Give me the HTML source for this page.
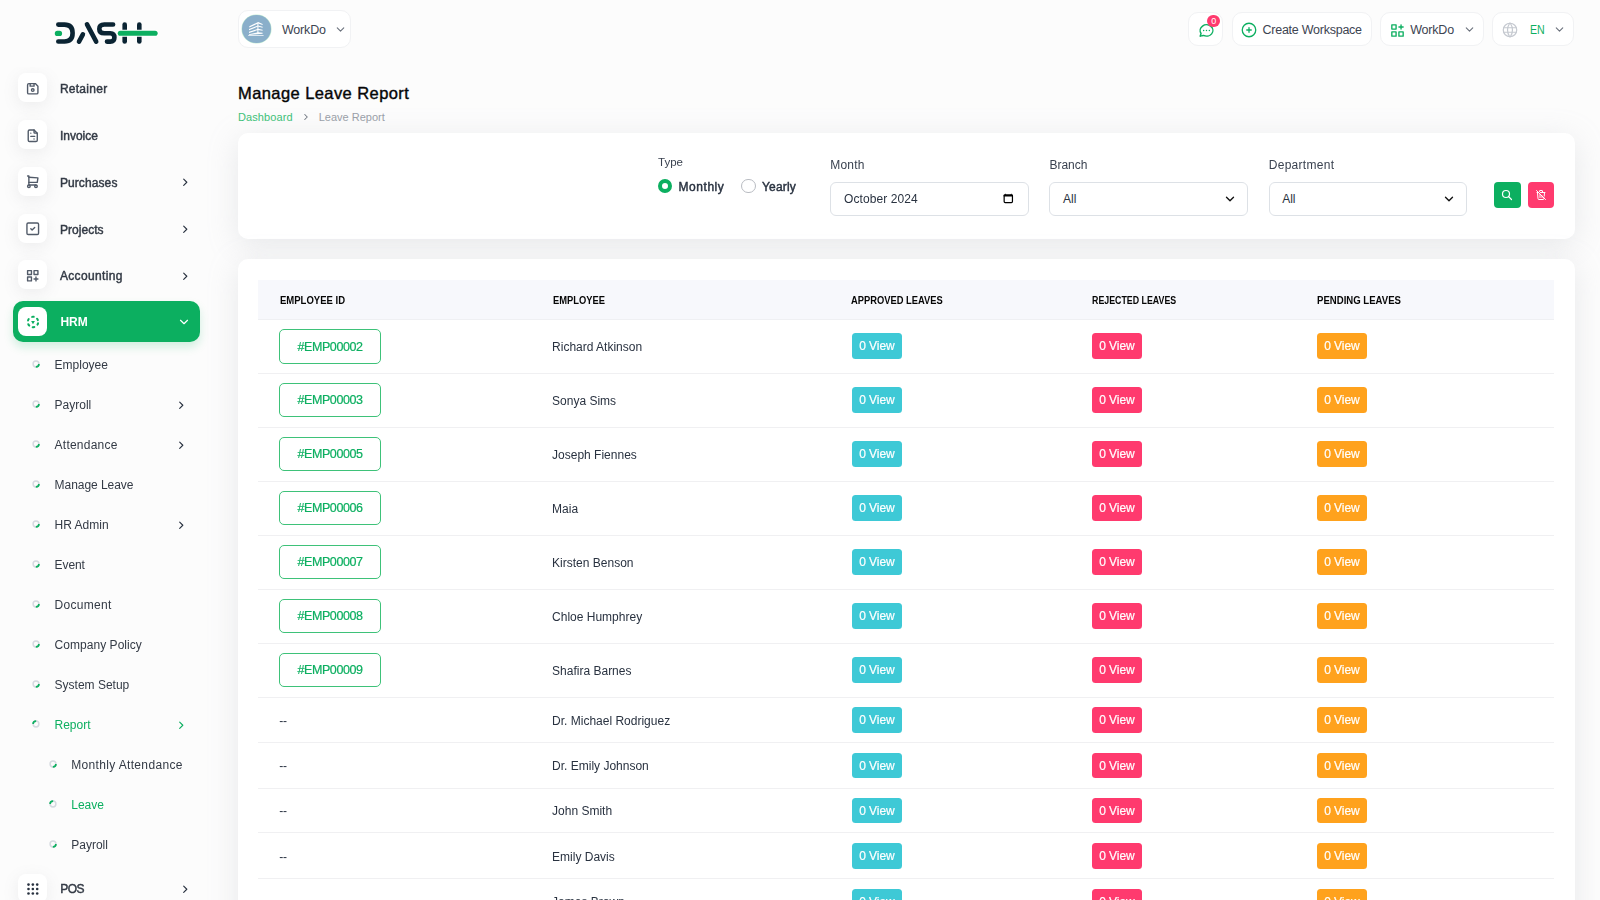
<!DOCTYPE html>
<html>
<head>
<meta charset="utf-8">
<style>
*{box-sizing:border-box;margin:0;padding:0}
html,body{width:1600px;height:900px;overflow:hidden}
body{position:relative;background:#fcfcfc;font-family:"Liberation Sans",sans-serif;color:#293240}
.abs{position:absolute;overflow:visible}
.t{position:absolute;white-space:nowrap;line-height:1}
.sbw{position:absolute;left:0;top:0;width:237px;height:900px;will-change:transform}
.ibox{position:absolute;left:18.2px;width:29.3px;height:29px;border-radius:8px;background:#fff;box-shadow:0 4px 16px rgba(120,125,135,0.12)}
.clip{position:absolute;left:0;top:67px;width:237px;height:833px;overflow:hidden}
.hbox{position:absolute;background:#fff;border:1px solid #f1f2f4;border-radius:10px}
.card{position:absolute;left:237.5px;width:1337px;background:#fff;border-radius:10px;box-shadow:0 6px 30px rgba(178,184,192,0.28)}
.inp{position:absolute;top:182px;height:33.5px;width:199px;border:1px solid #dde1e6;border-radius:6px;background:#fff}
.line{position:absolute;left:258px;width:1296px;height:1px;background:#f0f0f2}
.eid{position:absolute;left:279.25px;width:101.5px;height:34.5px;border:1px solid #3ec279;border-radius:5px}
.bdg{position:absolute;width:50.75px;height:25.5px;border-radius:3.5px}
.gr{background:#0caf60}
</style>
</head>
<body>
<svg class="abs" style="left:50px;top:18px" width="112" height="32" viewBox="50 18 112 32">
  <g stroke="#0b2433" stroke-width="4.6" stroke-linecap="round" fill="none">
    <path d="M58.3 24.6 H64.5 Q72.6 24.6 72.6 33.05 Q72.6 41.5 64.5 41.5 H58.3"/>
    <path d="M79 41.6 L82.9 34.3"/>
    <path d="M87 24.3 L96.2 41.7"/>
    <path d="M113.1 24.5 H104.3 Q99.3 24.5 99.3 28.9 Q99.3 33.2 104.3 33.2 H110.3 Q114.4 33.2 114.4 37.4 Q114.4 41.6 110.3 41.6 H107"/>
    <path d="M124.7 24.6 V41.5"/>
    <path d="M139.3 24.6 V41.5"/>
  </g>
  <g stroke-linecap="round" fill="none">
    <path d="M57.4 33.4 H59.5" stroke="#0caf60" stroke-width="5.2"/>
    <path d="M120.3 33.25 H155.1" stroke="#fff" stroke-width="7.2"/>
    <path d="M120.3 33.25 H155.1" stroke="#0caf60" stroke-width="5.1"/>
  </g>
</svg>
<div class="sbw">
<div class="clip"><div class="ibox" style="top:6.00px"></div>
<div class="ibox" style="top:52.80px"></div>
<div class="ibox" style="top:99.60px"></div>
<div class="ibox" style="top:146.50px"></div>
<div class="ibox" style="top:193.30px"></div>
<div class="ibox" style="top:806.80px"></div>
</div>
<svg class="abs" style="left:25.35px;top:80.75px" width="15.5" height="15.5" viewBox="0 0 24 24" fill="none" stroke="#525b69" stroke-width="2.15" stroke-linecap="round" stroke-linejoin="round"><path d="M6 4h10l4 4v10a2 2 0 0 1 -2 2h-12a2 2 0 0 1 -2 -2v-12a2 2 0 0 1 2 -2"/><circle cx="12" cy="14" r="2"/><path d="M14 4l0 4l-6 0l0 -4"/></svg>
<div class="t" style="left:59.9px;top:83.04px;font-size:12px;color:#333a45;-webkit-text-stroke:0.45px #333a45;letter-spacing:0.27px;">Retainer</div>
<svg class="abs" style="left:25.35px;top:127.55px" width="15.5" height="15.5" viewBox="0 0 24 24" fill="none" stroke="#525b69" stroke-width="2.15" stroke-linecap="round" stroke-linejoin="round"><path d="M14 3v4a1 1 0 0 0 1 1h4"/><path d="M17 21h-10a2 2 0 0 1 -2 -2v-14a2 2 0 0 1 2 -2h7l5 5v11a2 2 0 0 1 -2 2z"/><path d="M9 8h.01"/><path d="M9 13h6"/><path d="M14 17h.01"/></svg>
<div class="t" style="left:59.9px;top:129.84px;font-size:12px;color:#333a45;-webkit-text-stroke:0.45px #333a45;">Invoice</div>
<svg class="abs" style="left:25.35px;top:174.35px" width="15.5" height="15.5" viewBox="0 0 24 24" fill="none" stroke="#525b69" stroke-width="2.15" stroke-linecap="round" stroke-linejoin="round"><path d="M6 19m-2 0a2 2 0 1 0 4 0a2 2 0 1 0 -4 0"/><path d="M17 19m-2 0a2 2 0 1 0 4 0a2 2 0 1 0 -4 0"/><path d="M17 17h-11v-14h-2"/><path d="M6 5l14 1l-1 7h-13"/></svg>
<div class="t" style="left:59.9px;top:176.64px;font-size:12px;color:#333a45;-webkit-text-stroke:0.45px #333a45;letter-spacing:0.1px;">Purchases</div>
<svg class="abs" style="left:178.75px;top:175.85px" width="12.5" height="12.5" viewBox="0 0 24 24" fill="none" stroke="#293240" stroke-width="2.2" stroke-linecap="round" stroke-linejoin="round"><path d="M9 6l6 6l-6 6"/></svg>
<svg class="abs" style="left:25.35px;top:221.25px" width="15.5" height="15.5" viewBox="0 0 24 24" fill="none" stroke="#525b69" stroke-width="2.15" stroke-linecap="round" stroke-linejoin="round"><path d="M3 5a2 2 0 0 1 2 -2h14a2 2 0 0 1 2 2v14a2 2 0 0 1 -2 2h-14a2 2 0 0 1 -2 -2v-14z"/><path d="M9 12l2 2l4 -4"/></svg>
<div class="t" style="left:59.9px;top:223.54px;font-size:12px;color:#333a45;-webkit-text-stroke:0.45px #333a45;letter-spacing:0.05px;">Projects</div>
<svg class="abs" style="left:178.75px;top:222.75px" width="12.5" height="12.5" viewBox="0 0 24 24" fill="none" stroke="#293240" stroke-width="2.2" stroke-linecap="round" stroke-linejoin="round"><path d="M9 6l6 6l-6 6"/></svg>
<svg class="abs" style="left:25.35px;top:268.05px" width="15.5" height="15.5" viewBox="0 0 24 24" fill="none" stroke="#525b69" stroke-width="2.15" stroke-linecap="round" stroke-linejoin="round"><path d="M4 4h6v6h-6z"/><path d="M14 4h6v6h-6z"/><path d="M4 14h6v6h-6z"/><path d="M14 17h6m-3 -3v6"/></svg>
<div class="t" style="left:59.9px;top:270.34px;font-size:12px;color:#333a45;-webkit-text-stroke:0.45px #333a45;letter-spacing:0.36px;">Accounting</div>
<svg class="abs" style="left:178.75px;top:269.55px" width="12.5" height="12.5" viewBox="0 0 24 24" fill="none" stroke="#293240" stroke-width="2.2" stroke-linecap="round" stroke-linejoin="round"><path d="M9 6l6 6l-6 6"/></svg>
<div class="abs gr" style="left:12.7px;top:300.8px;width:187.3px;height:40.8px;border-radius:10px;box-shadow:0 5px 10px rgba(12,175,96,0.18)"></div>
<div class="abs" style="left:18px;top:306.6px;width:29.4px;height:29.4px;border-radius:8px;background:#fff"></div>
<svg class="abs" style="left:25px;top:313px" width="16" height="16" viewBox="0 0 16 16"><circle cx="8" cy="9" r="5.2" fill="none" stroke="#0caf60" stroke-width="2" stroke-linecap="round" stroke-dasharray="1.6 3.845" transform="rotate(13 8 9)"/><path d="M6.1 8.0 L9.9 8.0 L8 11.2 Z" fill="#0caf60"/></svg>
<div class="t" style="left:60.4px;top:315.64px;font-size:12px;color:#ffffff;font-weight:700;">HRM</div>
<svg class="abs" style="left:176.6px;top:314.5px" width="14" height="14" viewBox="0 0 24 24" fill="none" stroke="#ffffff" stroke-width="2" stroke-linecap="round" stroke-linejoin="round"><path d="M6 9l6 6l6 -6"/></svg>
<svg class="abs" style="left:31.299999999999997px;top:358.9px" width="10" height="10" viewBox="0 0 10 10"><circle cx="5" cy="5" r="2.9" fill="none" stroke="#d5d9e0" stroke-width="1.5"/><circle cx="5" cy="5" r="2.9" fill="none" stroke="#0caf60" stroke-width="1.7" stroke-dasharray="4.6 20" transform="rotate(0 5 5)"/></svg>
<div class="t" style="left:54.6px;top:358.54px;font-size:12px;color:#333a45;">Employee</div>
<svg class="abs" style="left:31.299999999999997px;top:398.9px" width="10" height="10" viewBox="0 0 10 10"><circle cx="5" cy="5" r="2.9" fill="none" stroke="#d5d9e0" stroke-width="1.5"/><circle cx="5" cy="5" r="2.9" fill="none" stroke="#0caf60" stroke-width="1.7" stroke-dasharray="4.6 20" transform="rotate(0 5 5)"/></svg>
<div class="t" style="left:54.6px;top:398.54px;font-size:12px;color:#333a45;">Payroll</div>
<svg class="abs" style="left:174.75px;top:399.25px" width="12.5" height="12.5" viewBox="0 0 24 24" fill="none" stroke="#293240" stroke-width="2.2" stroke-linecap="round" stroke-linejoin="round"><path d="M9 6l6 6l-6 6"/></svg>
<svg class="abs" style="left:31.299999999999997px;top:438.9px" width="10" height="10" viewBox="0 0 10 10"><circle cx="5" cy="5" r="2.9" fill="none" stroke="#d5d9e0" stroke-width="1.5"/><circle cx="5" cy="5" r="2.9" fill="none" stroke="#0caf60" stroke-width="1.7" stroke-dasharray="4.6 20" transform="rotate(0 5 5)"/></svg>
<div class="t" style="left:54.6px;top:438.54px;font-size:12px;color:#333a45;letter-spacing:0.23px;">Attendance</div>
<svg class="abs" style="left:174.75px;top:439.25px" width="12.5" height="12.5" viewBox="0 0 24 24" fill="none" stroke="#293240" stroke-width="2.2" stroke-linecap="round" stroke-linejoin="round"><path d="M9 6l6 6l-6 6"/></svg>
<svg class="abs" style="left:31.299999999999997px;top:478.9px" width="10" height="10" viewBox="0 0 10 10"><circle cx="5" cy="5" r="2.9" fill="none" stroke="#d5d9e0" stroke-width="1.5"/><circle cx="5" cy="5" r="2.9" fill="none" stroke="#0caf60" stroke-width="1.7" stroke-dasharray="4.6 20" transform="rotate(0 5 5)"/></svg>
<div class="t" style="left:54.6px;top:478.54px;font-size:12px;color:#333a45;letter-spacing:-0.05px;">Manage Leave</div>
<svg class="abs" style="left:31.299999999999997px;top:518.9px" width="10" height="10" viewBox="0 0 10 10"><circle cx="5" cy="5" r="2.9" fill="none" stroke="#d5d9e0" stroke-width="1.5"/><circle cx="5" cy="5" r="2.9" fill="none" stroke="#0caf60" stroke-width="1.7" stroke-dasharray="4.6 20" transform="rotate(0 5 5)"/></svg>
<div class="t" style="left:54.6px;top:518.54px;font-size:12px;color:#333a45;">HR Admin</div>
<svg class="abs" style="left:174.75px;top:519.25px" width="12.5" height="12.5" viewBox="0 0 24 24" fill="none" stroke="#293240" stroke-width="2.2" stroke-linecap="round" stroke-linejoin="round"><path d="M9 6l6 6l-6 6"/></svg>
<svg class="abs" style="left:31.299999999999997px;top:558.9px" width="10" height="10" viewBox="0 0 10 10"><circle cx="5" cy="5" r="2.9" fill="none" stroke="#d5d9e0" stroke-width="1.5"/><circle cx="5" cy="5" r="2.9" fill="none" stroke="#0caf60" stroke-width="1.7" stroke-dasharray="4.6 20" transform="rotate(0 5 5)"/></svg>
<div class="t" style="left:54.6px;top:558.54px;font-size:12px;color:#333a45;letter-spacing:-0.1px;">Event</div>
<svg class="abs" style="left:31.299999999999997px;top:598.9px" width="10" height="10" viewBox="0 0 10 10"><circle cx="5" cy="5" r="2.9" fill="none" stroke="#d5d9e0" stroke-width="1.5"/><circle cx="5" cy="5" r="2.9" fill="none" stroke="#0caf60" stroke-width="1.7" stroke-dasharray="4.6 20" transform="rotate(0 5 5)"/></svg>
<div class="t" style="left:54.6px;top:598.54px;font-size:12px;color:#333a45;letter-spacing:0.3px;">Document</div>
<svg class="abs" style="left:31.299999999999997px;top:638.9px" width="10" height="10" viewBox="0 0 10 10"><circle cx="5" cy="5" r="2.9" fill="none" stroke="#d5d9e0" stroke-width="1.5"/><circle cx="5" cy="5" r="2.9" fill="none" stroke="#0caf60" stroke-width="1.7" stroke-dasharray="4.6 20" transform="rotate(0 5 5)"/></svg>
<div class="t" style="left:54.6px;top:638.54px;font-size:12px;color:#333a45;letter-spacing:0.04px;">Company Policy</div>
<svg class="abs" style="left:31.299999999999997px;top:678.9px" width="10" height="10" viewBox="0 0 10 10"><circle cx="5" cy="5" r="2.9" fill="none" stroke="#d5d9e0" stroke-width="1.5"/><circle cx="5" cy="5" r="2.9" fill="none" stroke="#0caf60" stroke-width="1.7" stroke-dasharray="4.6 20" transform="rotate(0 5 5)"/></svg>
<div class="t" style="left:54.6px;top:678.54px;font-size:12px;color:#333a45;">System Setup</div>
<svg class="abs" style="left:31.200000000000003px;top:718.5px" width="10" height="10" viewBox="0 0 10 10"><circle cx="5" cy="5" r="2.9" fill="none" stroke="#d5d9e0" stroke-width="1.5"/><circle cx="5" cy="5" r="2.9" fill="none" stroke="#0caf60" stroke-width="1.7" stroke-dasharray="4.6 20" transform="rotate(180 5 5)"/></svg>
<div class="t" style="left:54.5px;top:718.54px;font-size:12px;color:#0caf60;">Report</div>
<svg class="abs" style="left:174.75px;top:719.25px" width="12.5" height="12.5" viewBox="0 0 24 24" fill="none" stroke="#0caf60" stroke-width="2.2" stroke-linecap="round" stroke-linejoin="round"><path d="M9 6l6 6l-6 6"/></svg>
<svg class="abs" style="left:48.1px;top:758.9px" width="10" height="10" viewBox="0 0 10 10"><circle cx="5" cy="5" r="2.9" fill="none" stroke="#d5d9e0" stroke-width="1.5"/><circle cx="5" cy="5" r="2.9" fill="none" stroke="#0caf60" stroke-width="1.7" stroke-dasharray="4.6 20" transform="rotate(0 5 5)"/></svg>
<div class="t" style="left:71.25px;top:758.54px;font-size:12px;color:#333a45;letter-spacing:0.34px;">Monthly Attendance</div>
<svg class="abs" style="left:48.1px;top:798.6px" width="10" height="10" viewBox="0 0 10 10"><circle cx="5" cy="5" r="2.9" fill="none" stroke="#d5d9e0" stroke-width="1.5"/><circle cx="5" cy="5" r="2.9" fill="none" stroke="#0caf60" stroke-width="1.7" stroke-dasharray="4.6 20" transform="rotate(180 5 5)"/></svg>
<div class="t" style="left:71.25px;top:798.54px;font-size:12px;color:#0caf60;">Leave</div>
<svg class="abs" style="left:48.1px;top:838.9px" width="10" height="10" viewBox="0 0 10 10"><circle cx="5" cy="5" r="2.9" fill="none" stroke="#d5d9e0" stroke-width="1.5"/><circle cx="5" cy="5" r="2.9" fill="none" stroke="#0caf60" stroke-width="1.7" stroke-dasharray="4.6 20" transform="rotate(0 5 5)"/></svg>
<div class="t" style="left:71.25px;top:838.54px;font-size:12px;color:#333a45;">Payroll</div>
<svg class="abs" style="left:22px;top:877.9px" width="22" height="22" viewBox="0 0 22 22"><circle cx="6.5" cy="6.6" r="1.3" fill="#293240"/><circle cx="6.5" cy="11.05" r="1.3" fill="#293240"/><circle cx="6.5" cy="15.5" r="1.3" fill="#293240"/><circle cx="10.85" cy="6.6" r="1.3" fill="#293240"/><circle cx="10.85" cy="11.05" r="1.3" fill="#293240"/><circle cx="10.85" cy="15.5" r="1.3" fill="#293240"/><circle cx="15.2" cy="6.6" r="1.3" fill="#293240"/><circle cx="15.2" cy="11.05" r="1.3" fill="#293240"/><circle cx="15.2" cy="15.5" r="1.3" fill="#293240"/></svg>
<div class="t" style="left:60.2px;top:882.64px;font-size:12px;color:#333a45;-webkit-text-stroke:0.45px #333a45;letter-spacing:-0.5px;">POS</div>
<svg class="abs" style="left:178.75px;top:883.05px" width="12.5" height="12.5" viewBox="0 0 24 24" fill="none" stroke="#293240" stroke-width="2.2" stroke-linecap="round" stroke-linejoin="round"><path d="M9 6l6 6l-6 6"/></svg>
</div>
<div class="hbox" style="left:237.7px;top:10px;width:113.7px;height:37.7px"></div>
<div class="abs" style="left:242.3px;top:14.8px;width:28.4px;height:28.4px;border-radius:50%;background:#8aafca;box-shadow:0 0 0 0.6px #c9f0d6"></div>
<svg class="abs" style="left:240px;top:12.5px" width="29" height="29" viewBox="0 0 29 29"><g fill="#ffffff"><path d="M9.3 13.2 L18.2 9.0 L22.6 11.0 L22.6 12.0 L18.2 10.4 L9.3 14.4 Z"/><path d="M9.0 16.0 L18.0 12.4 L22.6 13.8 L22.6 14.8 L18.0 13.6 L9.0 17.2 Z"/><path d="M9.0 18.8 L18.0 15.8 L22.6 16.8 L22.6 17.8 L18.0 17.0 L9.0 20.0 Z"/><path d="M9.0 21.3 L18.0 19.2 L22.6 19.8 L22.6 20.8 L9.0 21.9 Z"/><rect x="17.4" y="10" width="1" height="11"/><path d="M8.2 22.0 H23.6 V23.0 H8.2 Z" opacity="0.7"/></g></svg>
<div class="t" style="left:282px;top:23.82px;font-size:12.5px;color:#3d4451;letter-spacing:-0.2px;">WorkDo</div>
<svg class="abs" style="left:334.0px;top:23.0px" width="13" height="13" viewBox="0 0 24 24" fill="none" stroke="#6a717c" stroke-width="2" stroke-linecap="round" stroke-linejoin="round"><path d="M6 9l6 6l6 -6"/></svg>
<div class="hbox" style="left:1188px;top:12.3px;width:34.7px;height:33.7px"></div>
<svg class="abs" style="left:1197.8px;top:21.7px" width="17" height="17" viewBox="0 0 24 24" fill="none" stroke="#0caf60" stroke-width="2" stroke-linecap="round" stroke-linejoin="round"><path d="M3 20l1.3 -3.9c-2.324 -3.437 -1.426 -7.872 2.1 -10.374c3.526 -2.501 8.59 -2.296 11.845 .48c3.255 2.777 3.695 7.266 1.029 10.501c-2.666 3.235 -7.615 4.215 -11.574 2.293l-4.7 1"/><path d="M12 12l0 .01"/><path d="M8 12l0 .01"/><path d="M16 12l0 .01"/></svg>
<div class="abs" style="left:1207.3px;top:14.6px;width:12.7px;height:12.7px;border-radius:50%;background:#ff3a6e"></div>
<div class="t" style="left:1211.3px;top:16.98px;font-size:9px;color:#ffffff;">0</div>
<div class="hbox" style="left:1232px;top:12.3px;width:140px;height:33.7px"></div>
<svg class="abs" style="left:1240.3px;top:21.0px" width="18" height="18" viewBox="0 0 24 24" fill="none" stroke="#0caf60" stroke-width="1.75" stroke-linecap="round" stroke-linejoin="round"><path d="M3 12a9 9 0 1 0 18 0a9 9 0 0 0 -18 0"/><path d="M9 12h6"/><path d="M12 9v6"/></svg>
<div class="t" style="left:1262.5px;top:23.82px;font-size:12.5px;color:#3d4451;letter-spacing:-0.25px;">Create Workspace</div>
<div class="hbox" style="left:1379.6px;top:12.3px;width:104.4px;height:33.7px"></div>
<svg class="abs" style="left:1389.0px;top:21.8px" width="17" height="17" viewBox="0 0 24 24" fill="none" stroke="#0caf60" stroke-width="1.9" stroke-linecap="round" stroke-linejoin="round"><path d="M4 4h6v6h-6z"/><path d="M4 14h6v6h-6z"/><path d="M14 14h6v6h-6z"/><path d="M14 7h6m-3 -3v6"/></svg>
<div class="t" style="left:1410.2px;top:23.82px;font-size:12.5px;color:#3d4451;letter-spacing:-0.2px;">WorkDo</div>
<svg class="abs" style="left:1463.0px;top:23.0px" width="13" height="13" viewBox="0 0 24 24" fill="none" stroke="#6a717c" stroke-width="2" stroke-linecap="round" stroke-linejoin="round"><path d="M6 9l6 6l6 -6"/></svg>
<div class="hbox" style="left:1492.4px;top:12.3px;width:81.6px;height:33.7px"></div>
<svg class="abs" style="left:1501.1px;top:21.0px" width="18" height="18" viewBox="0 0 24 24" fill="none" stroke="#c5c9d0" stroke-width="1.6" stroke-linecap="round" stroke-linejoin="round"><path d="M3 12a9 9 0 1 0 18 0a9 9 0 0 0 -18 0"/><path d="M3.6 9h16.8"/><path d="M3.6 15h16.8"/><path d="M11.5 3a17 17 0 0 0 0 18"/><path d="M12.5 3a17 17 0 0 1 0 18"/></svg>
<div class="t" style="left:1529.6px;top:23.82px;font-size:12.5px;color:#0caf60;transform:scaleX(0.8500);transform-origin:0 0;">EN</div>
<svg class="abs" style="left:1552.8px;top:23.0px" width="13" height="13" viewBox="0 0 24 24" fill="none" stroke="#6a717c" stroke-width="2" stroke-linecap="round" stroke-linejoin="round"><path d="M6 9l6 6l6 -6"/></svg>
<div class="t" style="left:238px;top:84.78px;font-size:16.5px;color:#060606;letter-spacing:0.42px;-webkit-text-stroke:0.4px #060606;">Manage Leave Report</div>
<div class="t" style="left:238px;top:112.09px;font-size:11px;color:#3ec279;letter-spacing:0.1px;">Dashboard</div>
<svg class="abs" style="left:300.8px;top:111.8px" width="10" height="10" viewBox="0 0 24 24" fill="none" stroke="#6f7680" stroke-width="2.5" stroke-linecap="round" stroke-linejoin="round"><path d="M9 6l6 6l-6 6"/></svg>
<div class="t" style="left:318.75px;top:112.09px;font-size:11px;color:#9aa0a8;">Leave Report</div>
<div class="card" style="top:132.5px;height:106.5px"></div>
<div class="t" style="left:658px;top:156.77px;font-size:11.5px;color:#3a4250;">Type</div>
<div class="abs" style="left:657.5px;top:178.8px;width:14px;height:14px;border-radius:50%;border:4px solid #0caf60;background:#fff"></div>
<div class="t" style="left:678.5px;top:180.84px;font-size:12px;color:#293240;-webkit-text-stroke:0.45px #293240;letter-spacing:0.55px;">Monthly</div>
<div class="abs" style="left:741px;top:178.5px;width:14.5px;height:14.5px;border-radius:50%;border:1px solid #b9bcc2;background:#fff"></div>
<div class="t" style="left:762px;top:180.84px;font-size:12px;color:#293240;-webkit-text-stroke:0.45px #293240;letter-spacing:0.18px;">Yearly</div>
<div class="t" style="left:830.3px;top:159.14px;font-size:12px;color:#3a4250;letter-spacing:0.2px;">Month</div>
<div class="inp" style="left:830.3px;width:198.5px"></div>
<div class="t" style="left:844px;top:192.84px;font-size:12px;color:#293240;letter-spacing:0.09px;">October 2024</div>
<svg class="abs" style="left:1002.5px;top:192.5px" width="11" height="11" viewBox="0 0 11 11"><rect x="1.15" y="2.0" width="8.3" height="7.6" rx="1" fill="none" stroke="#000" stroke-width="1.2"/><rect x="0.6" y="1.6" width="9.4" height="2.0" rx="0.6" fill="#000"/><path d="M2.3 0.6 L3.3 1.8 H1.6 Z M8.3 0.6 L9.0 1.8 H7.3 Z" fill="#000"/></svg>
<div class="t" style="left:1049.4px;top:159.14px;font-size:12px;color:#3a4250;">Branch</div>
<div class="inp" style="left:1049.4px;width:198.3px"></div>
<div class="t" style="left:1063.1px;top:192.84px;font-size:12px;color:#293240;">All</div>
<svg class="abs" style="left:1223.1px;top:191.6px" width="14" height="14" viewBox="0 0 24 24" fill="none" stroke="#111111" stroke-width="2.3" stroke-linecap="round" stroke-linejoin="round"><path d="M6 9l6 6l6 -6"/></svg>
<div class="t" style="left:1268.7px;top:159.14px;font-size:12px;color:#3a4250;letter-spacing:0.3px;">Department</div>
<div class="inp" style="left:1268.5px;width:198.3px"></div>
<div class="t" style="left:1282.2px;top:192.84px;font-size:12px;color:#293240;">All</div>
<svg class="abs" style="left:1442.2px;top:191.6px" width="14" height="14" viewBox="0 0 24 24" fill="none" stroke="#111111" stroke-width="2.3" stroke-linecap="round" stroke-linejoin="round"><path d="M6 9l6 6l6 -6"/></svg>
<div class="abs" style="left:1494px;top:182.4px;width:26.8px;height:25.6px;border-radius:4px;background:#0caf60"></div>
<svg class="abs" style="left:1501.4px;top:189.3px" width="12" height="12" viewBox="0 0 24 24" fill="none" stroke="#ffffff" stroke-width="2.4" stroke-linecap="round" stroke-linejoin="round"><path d="M10 10m-7 0a7 7 0 1 0 14 0a7 7 0 1 0 -14 0"/><path d="M21 21l-6 -6"/></svg>
<div class="abs" style="left:1527.5px;top:182.4px;width:26.6px;height:25.6px;border-radius:4px;background:#ff3a6e"></div>
<svg class="abs" style="left:1534.8px;top:189.3px" width="12" height="12" viewBox="0 0 24 24" fill="none" stroke="#ffffff" stroke-width="2" stroke-linecap="round" stroke-linejoin="round"><path d="M3 3l18 18"/><path d="M4 7h3m4 0h9"/><path d="M10 11l0 6"/><path d="M14 14l0 3"/><path d="M5 7l1 12a2 2 0 0 0 2 2h8a2 2 0 0 0 2 -2l.077 -.923"/><path d="M18.384 14.373l.616 -7.373"/><path d="M9 5v-1a1 1 0 0 1 1 -1h4a1 1 0 0 1 1 1v3"/></svg>
<div class="card" style="top:259px;height:700px"></div>
<div class="abs" style="left:258px;top:280px;width:1295.75px;height:39.5px;background:#f7f8fc;border-bottom:1px solid #eff0f3"></div>
<div class="t" style="left:279.7px;top:295.11px;font-size:10.5px;color:#060606;font-weight:700;transform:scaleX(0.9060);transform-origin:0 0;">EMPLOYEE ID</div>
<div class="t" style="left:552.5px;top:295.11px;font-size:10.5px;color:#060606;font-weight:700;transform:scaleX(0.8910);transform-origin:0 0;">EMPLOYEE</div>
<div class="t" style="left:851.25px;top:295.11px;font-size:10.5px;color:#060606;font-weight:700;transform:scaleX(0.8900);transform-origin:0 0;">APPROVED LEAVES</div>
<div class="t" style="left:1092px;top:295.11px;font-size:10.5px;color:#060606;font-weight:700;transform:scaleX(0.8410);transform-origin:0 0;">REJECTED LEAVES</div>
<div class="t" style="left:1316.75px;top:295.11px;font-size:10.5px;color:#060606;font-weight:700;transform:scaleX(0.9130);transform-origin:0 0;">PENDING LEAVES</div>
<div class="line" style="top:372.5px"></div>
<div class="line" style="top:426.5px"></div>
<div class="line" style="top:480.5px"></div>
<div class="line" style="top:534.5px"></div>
<div class="line" style="top:588.5px"></div>
<div class="line" style="top:643.0px"></div>
<div class="line" style="top:696.5px"></div>
<div class="line" style="top:742.1px"></div>
<div class="line" style="top:787.5px"></div>
<div class="line" style="top:832.3px"></div>
<div class="line" style="top:878.2px"></div>
<div class="eid" style="top:329.00px"></div>
<div class="t" style="left:297.5px;top:340.67px;font-size:12.5px;color:#0caf60;letter-spacing:-0.42px;-webkit-text-stroke:0.2px #0caf60;">#EMP00002</div>
<div class="t" style="left:552.1px;top:341.09px;font-size:12px;color:#293240;">Richard Atkinson</div>
<div class="bdg" style="left:851.55px;top:333.45px;background:#3ec9d6"></div>
<div class="t" style="left:859.15px;top:340.49px;font-size:12px;color:#ffffff;letter-spacing:-0.05px;-webkit-text-stroke:0.2px #fff;">0 View</div>
<div class="bdg" style="left:1091.55px;top:333.45px;background:#ff3a6e"></div>
<div class="t" style="left:1099.15px;top:340.49px;font-size:12px;color:#ffffff;letter-spacing:-0.05px;-webkit-text-stroke:0.2px #fff;">0 View</div>
<div class="bdg" style="left:1316.55px;top:333.45px;background:#ffa21d"></div>
<div class="t" style="left:1324.15px;top:340.49px;font-size:12px;color:#ffffff;letter-spacing:-0.05px;-webkit-text-stroke:0.2px #fff;">0 View</div>
<div class="eid" style="top:382.75px"></div>
<div class="t" style="left:297.5px;top:394.42px;font-size:12.5px;color:#0caf60;letter-spacing:-0.42px;-webkit-text-stroke:0.2px #0caf60;">#EMP00003</div>
<div class="t" style="left:552.1px;top:394.84px;font-size:12px;color:#293240;">Sonya Sims</div>
<div class="bdg" style="left:851.55px;top:387.20px;background:#3ec9d6"></div>
<div class="t" style="left:859.15px;top:394.24px;font-size:12px;color:#ffffff;letter-spacing:-0.05px;-webkit-text-stroke:0.2px #fff;">0 View</div>
<div class="bdg" style="left:1091.55px;top:387.20px;background:#ff3a6e"></div>
<div class="t" style="left:1099.15px;top:394.24px;font-size:12px;color:#ffffff;letter-spacing:-0.05px;-webkit-text-stroke:0.2px #fff;">0 View</div>
<div class="bdg" style="left:1316.55px;top:387.20px;background:#ffa21d"></div>
<div class="t" style="left:1324.15px;top:394.24px;font-size:12px;color:#ffffff;letter-spacing:-0.05px;-webkit-text-stroke:0.2px #fff;">0 View</div>
<div class="eid" style="top:436.75px"></div>
<div class="t" style="left:297.5px;top:448.42px;font-size:12.5px;color:#0caf60;letter-spacing:-0.42px;-webkit-text-stroke:0.2px #0caf60;">#EMP00005</div>
<div class="t" style="left:552.1px;top:448.84px;font-size:12px;color:#293240;">Joseph Fiennes</div>
<div class="bdg" style="left:851.55px;top:441.20px;background:#3ec9d6"></div>
<div class="t" style="left:859.15px;top:448.24px;font-size:12px;color:#ffffff;letter-spacing:-0.05px;-webkit-text-stroke:0.2px #fff;">0 View</div>
<div class="bdg" style="left:1091.55px;top:441.20px;background:#ff3a6e"></div>
<div class="t" style="left:1099.15px;top:448.24px;font-size:12px;color:#ffffff;letter-spacing:-0.05px;-webkit-text-stroke:0.2px #fff;">0 View</div>
<div class="bdg" style="left:1316.55px;top:441.20px;background:#ffa21d"></div>
<div class="t" style="left:1324.15px;top:448.24px;font-size:12px;color:#ffffff;letter-spacing:-0.05px;-webkit-text-stroke:0.2px #fff;">0 View</div>
<div class="eid" style="top:490.75px"></div>
<div class="t" style="left:297.5px;top:502.42px;font-size:12.5px;color:#0caf60;letter-spacing:-0.42px;-webkit-text-stroke:0.2px #0caf60;">#EMP00006</div>
<div class="t" style="left:552.1px;top:502.84px;font-size:12px;color:#293240;">Maia</div>
<div class="bdg" style="left:851.55px;top:495.20px;background:#3ec9d6"></div>
<div class="t" style="left:859.15px;top:502.24px;font-size:12px;color:#ffffff;letter-spacing:-0.05px;-webkit-text-stroke:0.2px #fff;">0 View</div>
<div class="bdg" style="left:1091.55px;top:495.20px;background:#ff3a6e"></div>
<div class="t" style="left:1099.15px;top:502.24px;font-size:12px;color:#ffffff;letter-spacing:-0.05px;-webkit-text-stroke:0.2px #fff;">0 View</div>
<div class="bdg" style="left:1316.55px;top:495.20px;background:#ffa21d"></div>
<div class="t" style="left:1324.15px;top:502.24px;font-size:12px;color:#ffffff;letter-spacing:-0.05px;-webkit-text-stroke:0.2px #fff;">0 View</div>
<div class="eid" style="top:544.75px"></div>
<div class="t" style="left:297.5px;top:556.42px;font-size:12.5px;color:#0caf60;letter-spacing:-0.42px;-webkit-text-stroke:0.2px #0caf60;">#EMP00007</div>
<div class="t" style="left:552.1px;top:556.84px;font-size:12px;color:#293240;">Kirsten Benson</div>
<div class="bdg" style="left:851.55px;top:549.20px;background:#3ec9d6"></div>
<div class="t" style="left:859.15px;top:556.24px;font-size:12px;color:#ffffff;letter-spacing:-0.05px;-webkit-text-stroke:0.2px #fff;">0 View</div>
<div class="bdg" style="left:1091.55px;top:549.20px;background:#ff3a6e"></div>
<div class="t" style="left:1099.15px;top:556.24px;font-size:12px;color:#ffffff;letter-spacing:-0.05px;-webkit-text-stroke:0.2px #fff;">0 View</div>
<div class="bdg" style="left:1316.55px;top:549.20px;background:#ffa21d"></div>
<div class="t" style="left:1324.15px;top:556.24px;font-size:12px;color:#ffffff;letter-spacing:-0.05px;-webkit-text-stroke:0.2px #fff;">0 View</div>
<div class="eid" style="top:598.75px"></div>
<div class="t" style="left:297.5px;top:610.42px;font-size:12.5px;color:#0caf60;letter-spacing:-0.42px;-webkit-text-stroke:0.2px #0caf60;">#EMP00008</div>
<div class="t" style="left:552.1px;top:610.84px;font-size:12px;color:#293240;">Chloe Humphrey</div>
<div class="bdg" style="left:851.55px;top:603.20px;background:#3ec9d6"></div>
<div class="t" style="left:859.15px;top:610.24px;font-size:12px;color:#ffffff;letter-spacing:-0.05px;-webkit-text-stroke:0.2px #fff;">0 View</div>
<div class="bdg" style="left:1091.55px;top:603.20px;background:#ff3a6e"></div>
<div class="t" style="left:1099.15px;top:610.24px;font-size:12px;color:#ffffff;letter-spacing:-0.05px;-webkit-text-stroke:0.2px #fff;">0 View</div>
<div class="bdg" style="left:1316.55px;top:603.20px;background:#ffa21d"></div>
<div class="t" style="left:1324.15px;top:610.24px;font-size:12px;color:#ffffff;letter-spacing:-0.05px;-webkit-text-stroke:0.2px #fff;">0 View</div>
<div class="eid" style="top:652.75px"></div>
<div class="t" style="left:297.5px;top:664.42px;font-size:12.5px;color:#0caf60;letter-spacing:-0.42px;-webkit-text-stroke:0.2px #0caf60;">#EMP00009</div>
<div class="t" style="left:552.1px;top:664.84px;font-size:12px;color:#293240;">Shafira Barnes</div>
<div class="bdg" style="left:851.55px;top:657.20px;background:#3ec9d6"></div>
<div class="t" style="left:859.15px;top:664.24px;font-size:12px;color:#ffffff;letter-spacing:-0.05px;-webkit-text-stroke:0.2px #fff;">0 View</div>
<div class="bdg" style="left:1091.55px;top:657.20px;background:#ff3a6e"></div>
<div class="t" style="left:1099.15px;top:664.24px;font-size:12px;color:#ffffff;letter-spacing:-0.05px;-webkit-text-stroke:0.2px #fff;">0 View</div>
<div class="bdg" style="left:1316.55px;top:657.20px;background:#ffa21d"></div>
<div class="t" style="left:1324.15px;top:664.24px;font-size:12px;color:#ffffff;letter-spacing:-0.05px;-webkit-text-stroke:0.2px #fff;">0 View</div>
<div class="t" style="left:279.2px;top:714.64px;font-size:12px;color:#293240;letter-spacing:-0.3px;">--</div>
<div class="t" style="left:552.1px;top:714.94px;font-size:12px;color:#293240;">Dr. Michael Rodriguez</div>
<div class="bdg" style="left:851.55px;top:707.30px;background:#3ec9d6"></div>
<div class="t" style="left:859.15px;top:714.34px;font-size:12px;color:#ffffff;letter-spacing:-0.05px;-webkit-text-stroke:0.2px #fff;">0 View</div>
<div class="bdg" style="left:1091.55px;top:707.30px;background:#ff3a6e"></div>
<div class="t" style="left:1099.15px;top:714.34px;font-size:12px;color:#ffffff;letter-spacing:-0.05px;-webkit-text-stroke:0.2px #fff;">0 View</div>
<div class="bdg" style="left:1316.55px;top:707.30px;background:#ffa21d"></div>
<div class="t" style="left:1324.15px;top:714.34px;font-size:12px;color:#ffffff;letter-spacing:-0.05px;-webkit-text-stroke:0.2px #fff;">0 View</div>
<div class="t" style="left:279.2px;top:759.84px;font-size:12px;color:#293240;letter-spacing:-0.3px;">--</div>
<div class="t" style="left:552.1px;top:760.14px;font-size:12px;color:#293240;">Dr. Emily Johnson</div>
<div class="bdg" style="left:851.55px;top:752.50px;background:#3ec9d6"></div>
<div class="t" style="left:859.15px;top:759.54px;font-size:12px;color:#ffffff;letter-spacing:-0.05px;-webkit-text-stroke:0.2px #fff;">0 View</div>
<div class="bdg" style="left:1091.55px;top:752.50px;background:#ff3a6e"></div>
<div class="t" style="left:1099.15px;top:759.54px;font-size:12px;color:#ffffff;letter-spacing:-0.05px;-webkit-text-stroke:0.2px #fff;">0 View</div>
<div class="bdg" style="left:1316.55px;top:752.50px;background:#ffa21d"></div>
<div class="t" style="left:1324.15px;top:759.54px;font-size:12px;color:#ffffff;letter-spacing:-0.05px;-webkit-text-stroke:0.2px #fff;">0 View</div>
<div class="t" style="left:279.2px;top:804.94px;font-size:12px;color:#293240;letter-spacing:-0.3px;">--</div>
<div class="t" style="left:552.1px;top:805.24px;font-size:12px;color:#293240;">John Smith</div>
<div class="bdg" style="left:851.55px;top:797.60px;background:#3ec9d6"></div>
<div class="t" style="left:859.15px;top:804.64px;font-size:12px;color:#ffffff;letter-spacing:-0.05px;-webkit-text-stroke:0.2px #fff;">0 View</div>
<div class="bdg" style="left:1091.55px;top:797.60px;background:#ff3a6e"></div>
<div class="t" style="left:1099.15px;top:804.64px;font-size:12px;color:#ffffff;letter-spacing:-0.05px;-webkit-text-stroke:0.2px #fff;">0 View</div>
<div class="bdg" style="left:1316.55px;top:797.60px;background:#ffa21d"></div>
<div class="t" style="left:1324.15px;top:804.64px;font-size:12px;color:#ffffff;letter-spacing:-0.05px;-webkit-text-stroke:0.2px #fff;">0 View</div>
<div class="t" style="left:279.2px;top:850.54px;font-size:12px;color:#293240;letter-spacing:-0.3px;">--</div>
<div class="t" style="left:552.1px;top:850.84px;font-size:12px;color:#293240;">Emily Davis</div>
<div class="bdg" style="left:851.55px;top:843.20px;background:#3ec9d6"></div>
<div class="t" style="left:859.15px;top:850.24px;font-size:12px;color:#ffffff;letter-spacing:-0.05px;-webkit-text-stroke:0.2px #fff;">0 View</div>
<div class="bdg" style="left:1091.55px;top:843.20px;background:#ff3a6e"></div>
<div class="t" style="left:1099.15px;top:850.24px;font-size:12px;color:#ffffff;letter-spacing:-0.05px;-webkit-text-stroke:0.2px #fff;">0 View</div>
<div class="bdg" style="left:1316.55px;top:843.20px;background:#ffa21d"></div>
<div class="t" style="left:1324.15px;top:850.24px;font-size:12px;color:#ffffff;letter-spacing:-0.05px;-webkit-text-stroke:0.2px #fff;">0 View</div>
<div class="t" style="left:279.2px;top:895.94px;font-size:12px;color:#293240;letter-spacing:-0.3px;">--</div>
<div class="t" style="left:552.1px;top:896.24px;font-size:12px;color:#293240;">James Brown</div>
<div class="bdg" style="left:851.55px;top:888.60px;background:#3ec9d6"></div>
<div class="t" style="left:859.15px;top:895.64px;font-size:12px;color:#ffffff;letter-spacing:-0.05px;-webkit-text-stroke:0.2px #fff;">0 View</div>
<div class="bdg" style="left:1091.55px;top:888.60px;background:#ff3a6e"></div>
<div class="t" style="left:1099.15px;top:895.64px;font-size:12px;color:#ffffff;letter-spacing:-0.05px;-webkit-text-stroke:0.2px #fff;">0 View</div>
<div class="bdg" style="left:1316.55px;top:888.60px;background:#ffa21d"></div>
<div class="t" style="left:1324.15px;top:895.64px;font-size:12px;color:#ffffff;letter-spacing:-0.05px;-webkit-text-stroke:0.2px #fff;">0 View</div>
</body>
</html>
